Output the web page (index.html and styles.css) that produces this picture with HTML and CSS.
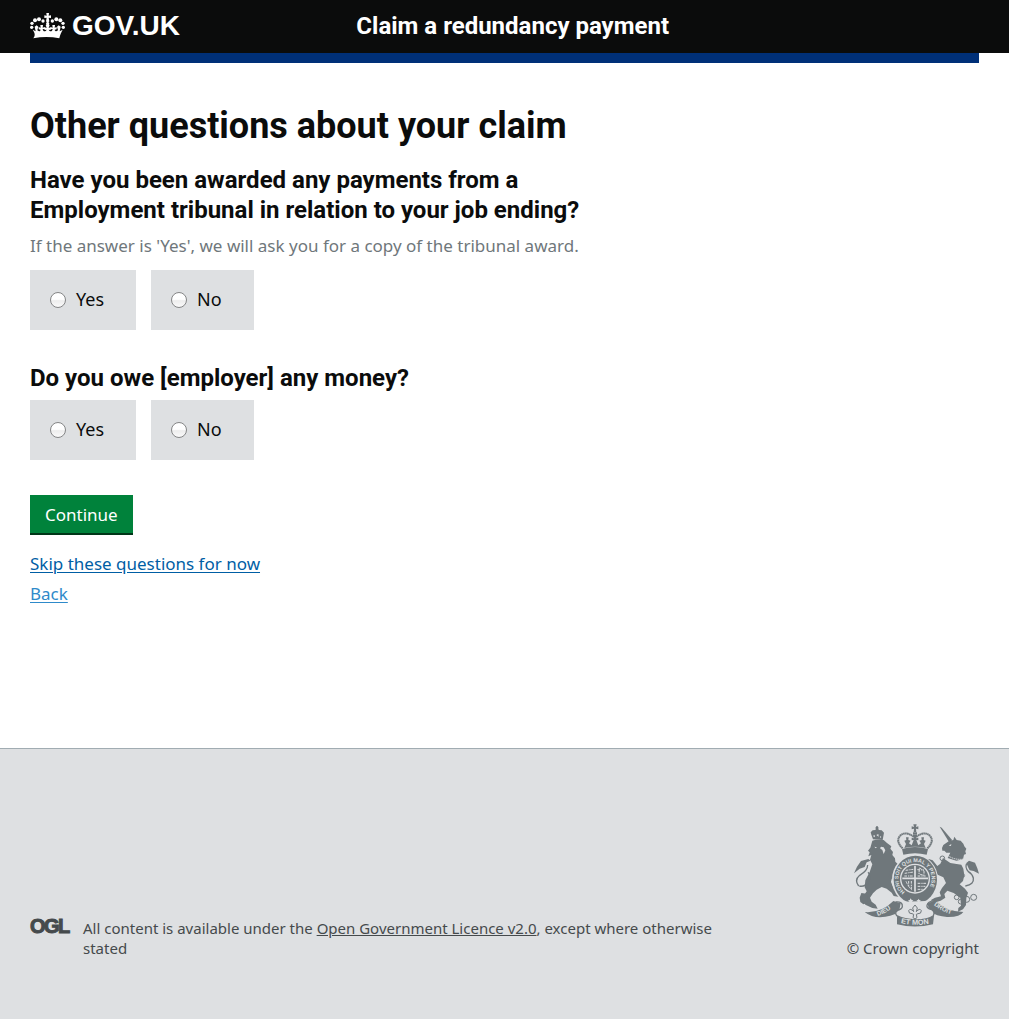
FILE: index.html
```html
<!DOCTYPE html>
<html lang="en">
<head>
<meta charset="utf-8">
<meta name="viewport" content="width=device-width, initial-scale=1">
<title>Other questions about your claim</title>
<link rel="stylesheet" href="styles.css">
</head>
<body>
<header class="site-header">
  <div class="header-inner">
    <a class="brand" href="#">
      <svg class="brand-crown" viewBox="0 0 105 78" aria-hidden="true">
        <g fill="currentColor">
          <path d="M49 0h8l-1 8 7-1v8l-7-1 2 11-5 6-5-6 2-11-7 1V7l7 1z"/>
          <circle cx="53" cy="32" r="5"/>
          <circle cx="39" cy="24" r="5"/><circle cx="27" cy="19" r="6"/><circle cx="15" cy="22" r="6"/><circle cx="6" cy="31" r="5"/><circle cx="5" cy="43" r="5"/>
          <circle cx="67" cy="24" r="5"/><circle cx="79" cy="19" r="6"/><circle cx="91" cy="22" r="6"/><circle cx="99" cy="31" r="5"/><circle cx="100" cy="43" r="5"/>
          <path d="M8 50l9 5-3-14 6-4 5 4-3 11c4 4 9 3 10-2l-6-1v-7l6 2-1-8h8l-1 8 6-2v7l-6-1c1 8 8 10 12 2l-6 1v-8l6 2-3-9h12l-3 9 6-2v8l-6-1c4 8 11 6 12-2l-6 1v-7l6 2-1-8h8l-1 8 6-2v7l-6 1c1 5 6 6 10 2l-3-11 5-4 6 4-3 14 9-5c-4 9-8 15-10 26-25-5-53-5-78 0C18 65 13 59 8 50z"/>
        </g>
      </svg>
      <span>GOV.UK</span>
    </a>
    <a class="service-name" href="#">Claim a redundancy payment</a>
  </div>
</header>
<div class="container header-edge"><div class="header-bar"></div></div>

<main class="container main">
  <h1>Other questions about your claim</h1>
  <form class="questions">
    <fieldset>
      <legend>Have you been awarded any payments from a Employment tribunal in relation to your job ending?</legend>
      <p class="hint">If the answer is 'Yes', we will ask you for a copy of the tribunal award.</p>
      <div class="choices">
        <label class="choice"><input type="radio" name="award" value="yes"><span>Yes</span></label>
        <label class="choice"><input type="radio" name="award" value="no"><span>No</span></label>
      </div>
    </fieldset>
    <fieldset>
      <legend>Do you owe [employer] any money?</legend>
      <div class="choices">
        <label class="choice"><input type="radio" name="owe" value="yes"><span>Yes</span></label>
        <label class="choice"><input type="radio" name="owe" value="no"><span>No</span></label>
      </div>
    </fieldset>
    <button class="button" type="button">Continue</button>
    <ul class="links">
      <li><a href="#">Skip these questions for now</a></li>
      <li><a class="back" href="#">Back</a></li>
    </ul>
  </form>
</main>

<footer class="site-footer">
  <div class="container footer-inner">
    <div class="licence">
      <svg class="ogl" viewBox="0 0 41 17" role="img" aria-label="Open Government Licence">
        <text class="ogl-text" x="0 14 28" y="15">OGL</text>
      </svg>
      <p>All content is available under the <a href="#">Open Government Licence v2.0</a>, except where otherwise stated</p>
    </div>
    <a class="copyright" href="#">
      <svg class="crest" viewBox="42 26 375 309" aria-hidden="true">
        <defs>
          <path id="garter" d="M195 230A50 50 0 1 1 255 230"/>
          <path id="dieu" d="M113 302Q139 294 168 269"/>
          <path id="droit" d="M281 269Q310 294 350 299"/>
          <path id="mon" d="M182 323Q226 334 275 324"/>
        </defs>
        <g fill="currentColor">
          <!-- lion -->
          <path d="M94 58l-2-7 6-6 8-1 2-4-3-2 3-2v-3h6v3l3 2-3 2 3 4 8 1 7 7-4 22-29-2z"/>
          <path d="M97 76l10-3 24 1 10 9 13 10-3 7 8 10-2 9 8 10 1 10 10 9 2 12-8 11-4 3-9 8-4 18 7 17 2 4 16 4 6 12-9 7-14-2-6-10-15-12-15-5-15 8-11 11-9 13 5 12 12 9 6 12-16-2-21-10-6-11 1-16 9-13-6-12 2-21 13-25 8-23-7-14 4-14-9 4 4-12-5-5 7-9z"/>
          <path d="M150 168l22 8 4 12-14 4-16-4z"/>
          <path d="M161 151l12-5 10 8-2 11-12 5-12-7z"/>
          <path d="M70 267l-9-7-2-13 5-14 17 2 2 28z"/>
          <path d="M42 174l9-20 12-17 22-6 7 5-12 5-6 14-15 5z"/>
          <!-- unicorn -->
          <path d="M299 34l6 3 32 38-10 5z"/>
          <path d="M306 98l4-9 16-11 14-4 3-10 7 10 12 2 8 9 3 8 6 7-3 8 2 8-6 2-3 14-20 4-26-8 8-16-12 0-6-6-6 0z"/>
          <path d="M309 128l22 15 33 5 6 12 3 20-4 17-10 10 16 13 9 12-5 16-1 21-9 13-15 7 1-11 8-7-2-24-20-14-19-7-9 10 3 11-14 9-15 5-10 1-4-8 12-7 18-4-4-12 7-13 12-15-8-17-20-9-20 5-3-8 19-8-8-12-19-3-11-8-2-9 12 4 8-7 12 4 14 17 9-7z"/>
          <path d="M385 157l-6-14 8-7 18 6 7 17 5 16-16-8-12-2z"/>
          <!-- crown -->
          <path d="M220 27h10l-2 8 7-2v9l-7-2 1 10h-8l1-10-7 2v-9l7 2z"/>
          <path d="M186 101q39-12 78 0l-4 17q-35-9-70 0z"/>
          <path d="M220 60h10l-2 9 7-2v8l-6-1 6 16 8-6-5-8 7-2-1-8h8l-1 8 6 2-5 10 5 12q-32-7-64 0l5-12-5-10 6-2-1-8h8l-1 8 7 2-5 8 8 6 6-16-6 1v-8l7 2z"/>
        </g>
        <g fill="none" stroke="currentColor" stroke-width="6">
          <path d="M56 212q-14-18 3-32 24-14 24-31" stroke-width="4"/>
          <path d="M58 212q16 4 27-12 9-20-1-29" stroke-width="4"/>
          <path d="M376 212q27-4 24-24-3-12-15-19-11-13-5-24" stroke-width="4"/>
          <path d="M188 99q-20-19-10-35 16-20 44 1v-15M262 99q20-19 10-35-16-20-44 1v-15" stroke-dasharray="5 1"/>
          <circle cx="350" cy="246" r="7" stroke-width="3"/><circle cx="362" cy="259" r="7" stroke-width="3"/><circle cx="380" cy="252" r="9" stroke-width="3"/><circle cx="401" cy="246" r="9" stroke-width="3"/>
          <circle cx="307" cy="129" r="7" stroke-width="3"/><circle cx="369" cy="181" r="5" stroke-width="2"/>
        </g>
        <path d="M320 118q23 18 52 13M318 130q23 17 54 12" fill="none" stroke="#dee0e2" stroke-width="3" stroke-dasharray="4 2"/>
        <path d="M123 94l8 2 5 9-5 11-4-12-7-5zM103 94l8 2-4 3zM326 91l8-5-1 6zM98 62l6-3 1 7zM109 59l6-3 1 8zM120 61l4 4-3 4z" fill="#dee0e2"/>
        <!-- garter and shield -->
        <ellipse cx="225" cy="193" rx="69" ry="75" fill="#dee0e2"/>
        <ellipse cx="226" cy="193" rx="65" ry="72" fill="currentColor"/>
        <circle cx="225" cy="190" r="45" fill="#dee0e2"/>
        <circle cx="225" cy="190" r="41" fill="currentColor"/>
        <path d="M225 151v78M187 189h77" stroke="#dee0e2" stroke-width="5"/>
        <g fill="none" stroke="#dee0e2" stroke-width="3" stroke-dasharray="8 3 4 2">
          <path d="M197 165l23-3M194 174l27-4M193 182h28M233 204h26M233 213h23M233 222h17M232 163l20 1M233 182h24"/>
          <path d="M238 158l14 8v14l-15-4zM198 198q8 18 18 26M206 197v18M214 197v24"/>
        </g>
        <path d="M212 249l3 5 5 1-4 4 1 5-5-2-5 2 1-5-4-4 5-1zM236 250l2 4 5 1-4 3 1 5-4-2-4 2 1-5-4-3 5-1z" fill="#dee0e2"/>
        <text class="crest-text garter-text"><textPath href="#garter">HONI SOIT QUI MAL Y PENSE</textPath></text>
        <!-- motto scroll -->
        <path d="M74 290q50 4 86-33l22 7-5 26q-24 15-57 16-26 0-46-16zM263 264l23-9q31 34 84 35-10 16-49 15-31-2-54-18zM171 301q50 18 111 0l-3 26q-54 13-108 0z" fill="currentColor"/>
        <path d="M167 260q22-2 20 14-1 7-14 11-10 6-3 16 23 12 58 13 36-1 52-13 6-12-5-18-16-4-14-13 2-11 22-14" fill="#dee0e2" stroke="currentColor" stroke-width="4"/>
        <path d="M225 269l7 9-3 11q10-12 15-3 0 10-10 9l-5 2 2 10-6 4-6-4 2-10-5-2q-10 1-10-9 5-9 15 3l-3-11z" fill="none" stroke="currentColor" stroke-width="3"/>
        <text class="crest-text"><textPath href="#dieu">DIEU</textPath></text>
        <text class="crest-text"><textPath href="#droit">DROIT</textPath></text>
        <text class="crest-text mon-text"><textPath href="#mon">ET MON</textPath></text>
      </svg>
      <span>© Crown copyright</span>
    </a>
  </div>
</footer>
</body>
</html>
```
FILE: styles.css
```css
* { box-sizing: border-box; }

body {
  margin: 0;
  min-height: 100vh;
  display: flex;
  flex-direction: column;
  background: #dee0e2;
  color: #0b0c0c;
  font-family: "Noto Sans", sans-serif;
  font-size: 17px;
  line-height: 25px;
}

h1, p, ul, fieldset, legend { margin: 0; padding: 0; }
fieldset { border: 0; min-width: 0; }
ul { list-style: none; }

h1, legend, .service-name {
  font-family: Roboto, sans-serif;
  font-weight: 700;
}

.container { width: 100%; padding: 0 30px; }

/* Header */
.site-header { background: #0b0c0c; }
.header-inner {
  display: grid;
  grid-template-columns: 1fr 2fr;
  align-items: center;
  padding: 8px 30px 9px;
}
.brand {
  display: flex;
  align-items: center;
  gap: 7px;
  color: #fff;
  font: bold 28px/36px "Liberation Sans", sans-serif;
  text-decoration: none;
}
.brand-crown { width: 35px; height: 26px; }
.service-name {
  padding-left: 10px;
  color: #fff;
  font-size: 24px;
  line-height: 30px;
  text-decoration: none;
}
.header-edge, .main { background: #fff; }
.header-bar { height: 10px; background: #003078; }

/* Questions */
.main { padding-top: 43px; padding-bottom: 139px; }
h1 {
  margin-bottom: 19px;
  font-size: 36px;
  line-height: 40px;
}
.questions { max-width: 602px; }
fieldset + fieldset { margin-top: 33px; }
legend {
  font-size: 24px;
  line-height: 30px;
}
.hint { padding: 8px 0 5px; color: #6f777b; }
.choices { display: flex; gap: 15px; padding-top: 7px; }
.choice {
  display: flex;
  align-items: center;
  gap: 10px;
  padding: 17px 32px 18px 20px;
  background: #dee0e2;
  font-size: 18px;
}
.choice input {
  appearance: none;
  width: 16px;
  height: 16px;
  margin: 0;
  border: 1px solid #858687;
  border-radius: 50%;
  background: linear-gradient(#fff, #fff 45%, #ededed 55%, #fafafa);
}
.button {
  display: block;
  margin: 35px 0 0;
  padding: 7px 15px 6px;
  border: 0;
  border-bottom: 2px solid #003618;
  background: #00823b;
  color: #fff;
  font: inherit;
}
.links { padding-top: 14px; line-height: 30px; }
.links a { color: #005ea5; text-underline-offset: 2px; }
.links .back { color: #2e8aca; }

/* Footer */
.site-footer {
  flex: 1;
  padding: 75px 0 61px;
  border-top: 1px solid #a1acb2;
  color: #454a4c;
  font-size: 15px;
  line-height: 20px;
}
.footer-inner {
  display: flex;
  align-items: flex-end;
  justify-content: space-between;
  gap: 120px;
}
.licence { display: flex; align-items: flex-start; gap: 12px; }
.ogl { flex: none; width: 41px; height: 17px; overflow: visible; }
.ogl-text {
  font: bold 20px "Liberation Sans", sans-serif;
  fill: currentColor;
  stroke: currentColor;
  stroke-width: 1px;
}
.site-footer a { color: inherit; }
.copyright {
  flex: none;
  display: flex;
  flex-direction: column;
  align-items: flex-end;
  gap: 11px;
}
.site-footer .copyright { text-decoration: none; }
.crest { width: 125px; height: 103px; color: #6f777b; }
.crest-text {
  font: bold 19px "Liberation Sans", sans-serif;
  fill: #dee0e2;
}
.garter-text { font-size: 16px; }
.mon-text { font-size: 22px; }
```
